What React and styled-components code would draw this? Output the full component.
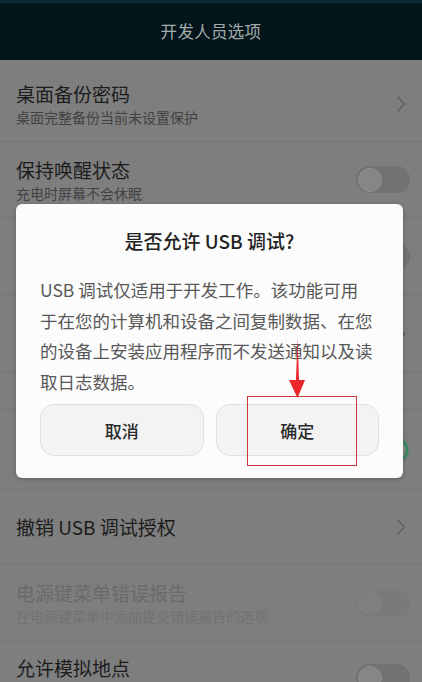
import React from "react";
import styled, { createGlobalStyle } from "styled-components";

const Global = createGlobalStyle`
  html, body {
    margin: 0;
    padding: 0;
    height: 682px;
    overflow: hidden;
    background: #7e7e7e;
  }
  #root {
    height: 682px;
  }
  * {
    box-sizing: border-box;
  }
`;

const font = `"Noto Sans CJK SC", "Noto Sans", Roboto, sans-serif`;

export default function App() {
  return (
    <Page>
      <Global />
      <Header>
        <div className="title">开发人员选项</div>
      </Header>
      <List>
        {rows.map((row, i) =>
          row.section ? (
            <Section key={i} $h={row.h}>
              {row.title}
            </Section>
          ) : (
            <Row key={i} $h={row.h}>
              <div className="text">
                <Title $disabled={row.disabled}>{row.title}</Title>
                {row.sub && <Sub $disabled={row.disabled}>{row.sub}</Sub>}
              </div>
              {row.type === "chevron" && <Chevron />}
              {row.type === "toggle" && (
                <Toggle $on={row.on} $disabled={row.disabled}>
                  <span />
                </Toggle>
              )}
            </Row>
          )
        )}
      </List>

      <Overlay>
        <Dialog>
          <h3>是否允许 USB 调试?</h3>
          <Body>
            <span>USB 调试仅适用于开发工作。该功能可用</span>
            <span>于在您的计算机和设备之间复制数据、在您</span>
            <span>的设备上安装应用程序而不发送通知以及读</span>
            <span>取日志数据。</span>
          </Body>
          <Buttons>
            <Button>取消</Button>
            <Button>确定</Button>
          </Buttons>
          <Arrow width="30" height="64" viewBox="0 0 30 64">
            <path d="M15.5 0 L17.2 47 L13.8 47 Z" fill="#e8262c" />
            <path d="M7 42 L23 42 L15.5 60 Z" fill="#e8262c" />
          </Arrow>
          <Mark />
        </Dialog>
      </Overlay>
    </Page>
  );
}

function Chevron() {
  return (
    <ChevronIcon width="10" height="18" viewBox="0 0 10 18">
      <path d="M1.5 1.5 L8.5 9 L1.5 16.5" fill="none" stroke="#606060" strokeWidth="1.4" />
    </ChevronIcon>
  );
}

const Page = styled.div`
  position: relative;
  height: 682px;
  overflow: hidden;
  font-family: ${font};
  background: #7e7e7e;
`;

const Header = styled.header`
  height: 60px;
  background: #03151a;
  border-top: 3px solid #0a2b33;
  display: flex;
  align-items: center;
  justify-content: center;
  .title {
    color: #a3abab;
    font-size: 16.5px;
    letter-spacing: 0.3px;
    margin-top: -2px;
  }
`;

const List = styled.div`
  padding-top: 7px;
`;

const Row = styled.div`
  height: ${(p) => p.$h}px;
  display: flex;
  align-items: center;
  padding: 0 12px 0 16px;
  border-bottom: 1px solid #747474;
  .text {
    flex: 1;
    display: flex;
    flex-direction: column;
  }
`;

const Section = styled.div`
  height: ${(p) => p.$h}px;
  display: flex;
  align-items: center;
  padding: 0 16px;
  font-size: 14px;
  color: #3a4f4f;
  border-bottom: 1px solid #747474;
`;

const Title = styled.div`
  font-size: 19px;
  line-height: 26px;
  color: ${(p) => (p.$disabled ? "#6a6a6a" : "#1c1c1c")};
`;

const Sub = styled.div`
  font-size: 14px;
  line-height: 20px;
  color: ${(p) => (p.$disabled ? "#727272" : "#424242")};
`;

const ChevronIcon = styled.svg`
  margin-right: 4px;
  flex-shrink: 0;
`;

const Toggle = styled.div`
  width: 54px;
  height: 27px;
  border-radius: 14px;
  flex-shrink: 0;
  display: flex;
  align-items: center;
  justify-content: ${(p) => (p.$on ? "flex-end" : "flex-start")};
  padding: 0 2px;
  background: ${(p) => (p.$disabled ? "#7a7a7a" : p.$on ? "#6f7f78" : "#727272")};
  span {
    width: 24px;
    height: 24px;
    border-radius: 50%;
    background: ${(p) => (p.$disabled ? "#7f7f7f" : "#868686")};
    border: ${(p) =>
      p.$on ? "2.5px solid #2f8a62" : p.$disabled ? "1px solid #818181" : "1px solid #8e8e8e"};
  }
`;

const Overlay = styled.div`
  position: absolute;
  inset: 0;
  display: flex;
  align-items: center;
  justify-content: center;
  padding-right: 3px;
`;

const Dialog = styled.div`
  position: relative;
  width: 387px;
  background: #fcfcfc;
  border-radius: 6px;
  padding: 20px 24px 22px;
  box-shadow: 0 1px 4px rgba(0, 0, 0, 0.25);
  h3 {
    margin: 0;
    text-align: center;
    font-size: 19px;
    line-height: 34px;
    font-weight: 500;
    color: #222;
  }
`;

const Body = styled.p`
  margin: 17px 0 0;
  font-size: 17.5px;
  line-height: 30.5px;
  color: #585858;
  span {
    display: block;
    white-space: nowrap;
  }
`;

const Buttons = styled.div`
  display: grid;
  grid-template-columns: 1fr 1fr;
  gap: 12px;
  margin-top: 7px;
`;

const Button = styled.button`
  height: 52px;
  border-radius: 14px;
  border: 1px solid #e0e0e0;
  background: #f3f3f3;
  font-family: ${font};
  font-size: 17px;
  font-weight: 500;
  color: #2a2a2a;
`;

const Arrow = styled.svg`
  position: absolute;
  left: 266px;
  top: 134px;
`;

const Mark = styled.div`
  position: absolute;
  left: 231px;
  top: 192px;
  width: 110px;
  height: 70px;
  border: 1px solid #c8383b;
`;

const rows = [
  { h: 75, title: "桌面备份密码", sub: "桌面完整备份当前未设置保护", type: "chevron" },
  { h: 76, title: "保持唤醒状态", sub: "充电时屏幕不会休眠", type: "toggle" },
  { h: 77, title: "启用蓝牙 HCI 信息收集日志", sub: "捕获单个文件内的所有蓝牙 HCI 数据包", type: "toggle" },
  { h: 78, title: "进程统计信息", sub: "有关正在运行的进程的技术统计信息", type: "chevron" },
  { h: 37, section: true, title: "调试" },
  { h: 80, title: "USB 调试", sub: "连接 USB 后启用调试模式", type: "toggle", on: true },
  { h: 75, title: "撤销 USB 调试授权", type: "chevron" },
  { h: 77, title: "电源键菜单错误报告", sub: "在电源键菜单中添加提交错误报告的选项", type: "toggle", disabled: true },
  { h: 72, title: "允许模拟地点", sub: "允许模拟位置", type: "toggle" },
];
